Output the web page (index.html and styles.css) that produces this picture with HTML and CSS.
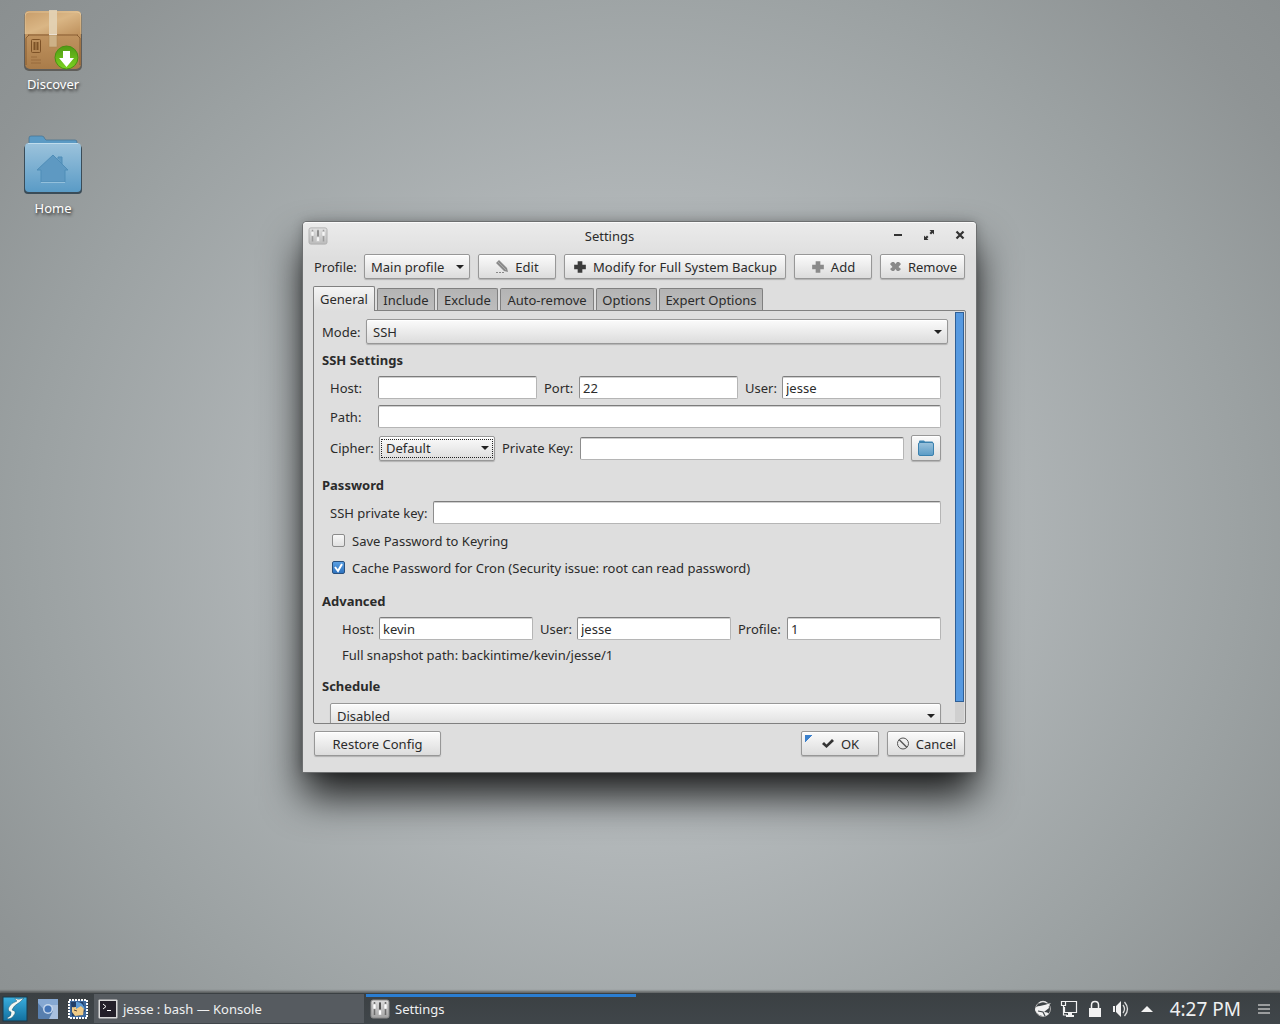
FILE: index.html
```html
<!DOCTYPE html>
<html lang="en">
<head>
<meta charset="utf-8">
<title>Settings</title>
<link rel="stylesheet" href="styles.css">
</head>
<body>
<svg class="defs" aria-hidden="true">
  <defs>
    <linearGradient id="box-top" x1="0" y1="0" x2="1" y2="1"><stop offset="0" stop-color="#c79c69"/><stop offset=".5" stop-color="#dab685"/><stop offset="1" stop-color="#be915d"/></linearGradient>
    <linearGradient id="box-front" x1="0" y1="0" x2="0" y2="1"><stop offset=".4" stop-color="#c0935f"/><stop offset="1" stop-color="#a97c4a"/></linearGradient>
    <linearGradient id="badge" x1="0" y1="0" x2="0" y2="1"><stop offset="0" stop-color="#4f9a14"/><stop offset="1" stop-color="#7cd321"/></linearGradient>
    <linearGradient id="folder" x1="0" y1="0" x2="0" y2="1"><stop offset="0" stop-color="#9cc3dc"/><stop offset="1" stop-color="#5a9bc6"/></linearGradient>
    <linearGradient id="cyan" x1="0" y1="0" x2="0" y2="1"><stop offset="0" stop-color="#3aaede"/><stop offset="1" stop-color="#12709f"/></linearGradient>
    <linearGradient id="silver" x1="0" y1="0" x2="0" y2="1"><stop offset="0" stop-color="#dedede"/><stop offset="1" stop-color="#a2a2a2"/></linearGradient>
    <symbol id="mixer" viewBox="0 0 20 20">
      <rect x="1" y="1" width="18" height="18" rx="2" fill="url(#silver)" stroke="#8b8b8b"/>
      <path d="M4.500 3v13M10 3v13M15.500 3v13" stroke="#6c6c6c" stroke-width="1.500"/>
      <path d="M3 5h3v5H3zM8.500 11h3v5h-3zM14 5h3v5h-3z" fill="#fff" stroke="#aaa" stroke-width=".5"/>
      <path d="M10 4v6" stroke="#444" stroke-width="1.500"/>
    </symbol>
    <symbol id="plus" viewBox="0 0 12 12"><path d="M4 1h4v3h3v4H8v3H4V8H1V4h3z" fill="currentColor"/></symbol>
  </defs>
</svg>

<main class="desktop">
  <nav class="shortcuts" aria-label="Desktop">
    <a class="shortcut" href="#discover">
      <svg width="62" height="62" viewBox="0 0 62 62" aria-hidden="true">
        <rect x="2" y="3" width="58" height="59" rx="5" fill="#4a4640" opacity=".7"/>
        <rect x="3" y="2" width="56" height="58" rx="5" fill="url(#box-front)"/>
        <path d="M3 25V6q0-4 4-4h48q4 0 4 4v19z" fill="url(#box-top)"/>
        <path d="M3 25V7q0-4 4-4h48q4 0 4 4v18" fill="none" stroke="#ecd2a8" opacity=".6"/>
        <path d="M6 26h50M4 56V29l3-3M58 56V29l-3-3" fill="none" stroke="#7d532a" opacity=".8"/>
        <path d="M27 1h8v24h-8z" fill="#e3d3b6" opacity=".9"/>
        <path d="M27 25h8v1h-8z" fill="#fff"/>
        <path d="M27 26h8v12h-8z" fill="#cdb187" stroke="#a9834f" stroke-width=".5"/>
        <g fill="none" stroke="#7d5227"><rect x="9.500" y="30.500" width="9" height="13" rx="1"/><path d="M12.500 41v-8M15.500 41v-8" stroke-width="2"/><path d="M9 48h6M9 51h10M9 54h10" opacity=".45"/></g>
        <circle cx="44.500" cy="48.500" r="11.500" fill="url(#badge)" stroke="#4a9014"/>
        <path d="M41 42h7v7h4l-7.500 9-7.500-9h4z" fill="#fff"/>
      </svg>
      <span>Discover</span>
    </a>
    <a class="shortcut" href="#home">
      <svg width="62" height="62" viewBox="0 0 62 62" aria-hidden="true">
        <path d="M7 14V5q0-2 2-2h11q2 0 3 3l1 1h29q2 0 2 2v8z" fill="#5b9ac4" stroke="#43718f" stroke-width=".7"/>
        <rect x="2" y="12" width="58" height="49" rx="4" fill="#3a4c58"/>
        <rect x="3" y="10" width="56" height="49" rx="4" fill="url(#folder)"/>
        <path d="M6 10.500h50" stroke="#bfdcec"/>
        <path d="M31 22 46 37h-3v12H19V37h-4zM36 26v-2h4v7" fill="#5e99c2" stroke="#4f8db7"/>
        <path d="M19 49.500h24" stroke="#93c0dc"/>
      </svg>
      <span>Home</span>
    </a>
  </nav>

  <form class="window" aria-label="Settings" onsubmit="return false">
    <header class="titlebar">
      <svg class="dim" width="20" height="18" viewBox="0 0 20 20" preserveAspectRatio="none" aria-hidden="true"><use href="#mixer"/></svg>
      <h1>Settings</h1>
      <div class="controls">
        <button type="button" aria-label="Minimize"><svg width="12" height="12" viewBox="0 0 12 12"><path d="M2 6h8" stroke="#333" stroke-width="2"/></svg></button>
        <button type="button" aria-label="Maximize"><svg width="12" height="12" viewBox="0 0 12 12"><path d="M6.500 1H11v4.500L9.500 4 8 5.500 6.500 4 8 2.500zM1 6.500 2.500 8 4 6.500 5.500 8 4 9.500 5.500 11H1z" fill="#333"/></svg></button>
        <button type="button" aria-label="Close"><svg width="12" height="12" viewBox="0 0 12 12"><path d="M2.500 2.500l7 7M9.500 2.500l-7 7" stroke="#333" stroke-width="2.200"/></svg></button>
      </div>
    </header>

    <div class="profiles">
      <label for="profile">Profile:</label>
      <select id="profile" class="profile-select"><option>Main profile</option></select>
      <button type="button" class="btn">
        <svg width="14" height="14" viewBox="0 0 14 14" aria-hidden="true"><path d="M4 0 12 8l1 4-4-1L1 3z" fill="#8a8a8a"/><path d="M3 2l8 8" stroke="#aaa"/><path d="M1 12.500h8" stroke="#888" stroke-dasharray="2 1"/></svg>
        Edit</button>
      <button type="button" class="btn wide">
        <svg class="dark" width="14" height="14" aria-hidden="true"><use href="#plus"/></svg>
        Modify for Full System Backup</button>
      <button type="button" class="btn">
        <svg class="grey" width="14" height="14" aria-hidden="true"><use href="#plus"/></svg>
        Add</button>
      <button type="button" class="btn remove">
        <svg width="14" height="14" viewBox="0 0 14 14" aria-hidden="true"><path d="M4 2h2l1.500 2L9 2h2l2 2-2.500 3 2.500 2-2 2H9L7.500 9 6 11H4L2 9l2.500-2L2 4z" fill="#8a8a8a"/></svg>
        Remove</button>
    </div>

    <div class="tabs" role="tablist">
      <button type="button" role="tab" class="tab t-general" aria-selected="true">General</button>
      <button type="button" role="tab" class="tab t-include">Include</button>
      <button type="button" role="tab" class="tab t-options">Exclude</button>
      <button type="button" role="tab" class="tab t-auto">Auto-remove</button>
      <button type="button" role="tab" class="tab t-options">Options</button>
      <button type="button" role="tab" class="tab t-expert">Expert Options</button>
    </div>

    <section class="pane" role="tabpanel" aria-label="General">
      <div class="fields">
        <div class="mode">
          <label for="mode">Mode:</label>
          <select id="mode"><option>SSH</option></select>
        </div>

        <h2>SSH Settings</h2>
        <div class="row ssh">
          <label for="host">Host:</label><input id="host" type="text">
          <label for="port">Port:</label><input id="port" type="text" value="22">
          <label for="user">User:</label><input id="user" type="text" value="jesse">
        </div>
        <div class="row path">
          <label for="path">Path:</label><input id="path" type="text">
        </div>
        <div class="row cipher">
          <label for="cipher">Cipher:</label>
          <span class="focused"><select id="cipher"><option>Default</option></select></span>
          <label for="key">Private Key:</label><input id="key" type="text">
          <button type="button" class="browse" aria-label="Choose key file">
            <svg width="18" height="18" viewBox="0 0 18 18" aria-hidden="true"><path d="M2 5V2.500Q2 1.500 3 1.500h4l1 1h7q1 0 1 1V5z" fill="#3f86b3"/><rect x="1.500" y="3.500" width="15" height="13" rx="1.500" fill="url(#folder)" stroke="#3b81ae"/></svg>
          </button>
        </div>

        <h2>Password</h2>
        <div class="row password">
          <label for="pkey">SSH private key:</label><input id="pkey" type="password">
        </div>
        <div class="check"><input id="keyring" type="checkbox"><label for="keyring">Save Password to Keyring</label></div>
        <div class="check"><input id="cron" type="checkbox" checked><label for="cron">Cache Password for Cron (Security issue: root can read password)</label></div>

        <h2>Advanced</h2>
        <div class="row advanced">
          <label for="ahost">Host:</label><input id="ahost" type="text" value="kevin">
          <label for="auser">User:</label><input id="auser" type="text" value="jesse">
          <label for="aprofile">Profile:</label><input id="aprofile" type="text" value="1">
        </div>
        <p class="snapshot">Full snapshot path: backintime/kevin/jesse/1</p>

        <h2>Schedule</h2>
        <div class="row schedule">
          <select aria-label="Schedule"><option>Disabled</option></select>
        </div>
      </div>
      <div class="scroll" aria-hidden="true"><div class="thumb"></div></div>
    </section>

    <footer class="actions">
      <button type="button" class="btn restore">Restore Config</button>
      <button type="submit" class="btn default">
        <svg width="14" height="14" viewBox="0 0 14 14" aria-hidden="true"><path d="M1 7l2-2 2.500 2.500L11 2l2 2-7.500 7z" fill="#333"/></svg>
        OK</button>
      <button type="button" class="btn">
        <svg width="14" height="14" viewBox="0 0 14 14" aria-hidden="true"><circle cx="7" cy="6.500" r="5.500" fill="none" stroke="#555"/><path d="M3 2.500l8 8" stroke="#555" stroke-width="1.500"/></svg>
        Cancel</button>
    </footer>
  </form>
</main>

<footer class="taskbar">
  <button type="button" class="launcher" aria-label="Applications">
    <svg width="26" height="26" viewBox="0 0 26 26"><rect x="1" y="1" width="24" height="24" fill="url(#cyan)" stroke="#1b3a4a"/><path d="M13 2q3 2 5 1l4-1-4 4q-7 4-8 8 5 1 2 5-2 4-6 4l-1-1q5-2 4-6-4-1-2-5 2-4 8-6-2-1-2-3z" fill="#f4f8f4" stroke="#275a70" stroke-width=".5"/></svg>
  </button>
  <button type="button" class="launcher" aria-label="Chromium">
    <svg width="20" height="20" viewBox="0 0 20 20"><rect width="20" height="20" rx="1" fill="#587fae"/><path d="M0 0h20v6H10L6 11 0 4z" fill="#86a8d2"/><path d="M10 6h10v14h-9l4-8z" fill="#a9c0de"/><circle cx="10" cy="10" r="5" fill="#c6d7ec"/><circle cx="10" cy="10" r="3.500" fill="#4576b8"/></svg>
  </button>
  <button type="button" class="launcher" aria-label="Mail">
    <svg width="20" height="20" viewBox="0 0 20 20"><rect x="1" y="1" width="18" height="18" fill="#3f699c" stroke="#fff" stroke-width="2" stroke-dasharray="2 1"/><path d="M3 3h12l2 9-5 5H4z" fill="#1f3d66"/><path d="M4 8q5 1 7-3l5 4-1 7-8 1-3-4z" fill="#f0cb86"/><path d="M8 3q7-1 9 8l-4-4-5 3z" fill="#5c9bd6"/><path d="M6 11l3 1" stroke="#543"/></svg>
  </button>
  <button type="button" class="task idle">
    <svg width="20" height="20" viewBox="0 0 20 20" aria-hidden="true"><rect x=".5" y=".5" width="19" height="19" rx="1" fill="#d8d8d8"/><rect x="2" y="2" width="16" height="16" fill="#231f29"/><path d="M5 5l3 2.500L5 10M9 11.500h4" fill="none" stroke="#fff"/></svg>
    jesse : bash — Konsole</button>
  <button type="button" class="task active">
    <svg width="20" height="20" aria-hidden="true"><use href="#mixer"/></svg>
    Settings</button>
  <div class="tray">
    <svg width="18" height="18" viewBox="0 0 18 18" aria-label="Updates"><circle cx="9" cy="9" r="7.500" fill="none" stroke="#aaa"/><path d="M1 10q0-4 5-4 5-1 11-3-3 2-2 5l-5 4q4 0 5 2-7 5-12-1z" fill="#f2f2f2"/><path d="M5 3q4-3 8 0" stroke="#ddd" stroke-width="1.500" fill="none"/><path d="M4 11l5 1 2 4" stroke="#40464a" stroke-width="1.200" fill="none"/></svg>
    <svg width="18" height="18" viewBox="0 0 18 18" aria-label="Network"><path d="M5 1.500h11.500v11H4.500V7M1.500 1.500h4v4h-4zM3.500 6v9H7" fill="none" stroke="#f2f2f2" stroke-width="1.200"/><path d="M8 13h4v2h2v2H6v-2h2z" fill="#f2f2f2"/></svg>
    <svg width="18" height="18" viewBox="0 0 18 18" aria-label="Lock"><path d="M3 8h12v9H3z" fill="#f2f2f2"/><path d="M5.500 8V5q0-3.500 3.500-3.500T12.500 5v3" fill="none" stroke="#f2f2f2" stroke-width="1.500"/></svg>
    <svg width="18" height="18" viewBox="0 0 18 18" aria-label="Volume"><path d="M1 6h2v6H1zM4 6l5-5v16l-5-5z" fill="#f2f2f2"/><path d="M11 5q3 4 0 8M12.500 2q6 7 0 14" fill="none" stroke="#ddd" stroke-width="1.300"/></svg>
    <svg width="18" height="18" viewBox="0 0 18 18" aria-label="More"><path d="M3 12l6-6 6 6z" fill="#f2f2f2"/></svg>
  </div>
  <time>4:27 PM</time>
  <button type="button" class="launcher menu" aria-label="Panel menu">
    <svg width="12" height="12" viewBox="0 0 12 12"><path d="M0 2h12M0 6h12M0 10h12" stroke="#9b9d9e" stroke-width="2"/></svg>
  </button>
</footer>
</body>
</html>
```
FILE: styles.css
```css
* { box-sizing: border-box; }

body {
  margin: 0;
  min-height: 100vh;
  display: flex;
  flex-direction: column;
  font: 13px/16px "Noto Sans", sans-serif;
  color: #2b2b2b;
  background: radial-gradient(ellipse 900px 840px at 50% 52%, #babfc1 0%, #b3b8ba 35%, #9ba1a2 68%, #8f9495 85%, #888d8e 100%);
}

button, input, select { font: inherit; color: inherit; margin: 0; }
h1, h2, p { margin: 0; font-size: inherit; font-weight: normal; }
.defs { position: absolute; width: 0; height: 0; }

/* Desktop */
.desktop {
  position: relative;
  flex: 1;
  display: flex;
  align-items: center;
  justify-content: center;
  padding: 1px 1px 0 0;
}
.shortcuts {
  position: absolute;
  top: 9px;
  left: 8px;
  display: flex;
  flex-direction: column;
  gap: 41px;
}
.shortcut {
  display: flex;
  flex-direction: column;
  align-items: center;
  gap: 5px;
  width: 90px;
  line-height: 16px;
  color: #fff;
  text-decoration: none;
  text-shadow: 1px 2px 3px #222;
}
.shortcut svg { display: block; }

/* Window */
.window {
  width: 673px;
  height: 550px;
  display: flex;
  flex-direction: column;
  padding: 0 10px 16px;
  background: linear-gradient(#ebebeb, #dedede 36px);
  border-radius: 4px 4px 0 0;
  box-shadow: inset 0 1px #fafafa, 0 0 0 1px #6d6f70, 0 24px 40px rgba(0, 0, 0, .85), 0 0 12px rgba(0, 0, 0, .25);
}
.titlebar {
  display: grid;
  grid-template-columns: 20px 1fr 80px;
  align-items: center;
  height: 32px;
  padding-bottom: 4px;
}
.titlebar h1 { text-align: center; }
.titlebar > svg { margin-left: -5px; }
.dim { opacity: .6; }
.controls { display: flex; justify-content: flex-end; gap: 19px; padding-bottom: 2px; }
.controls button { padding: 0; border: 0; background: none; line-height: 0; }

/* Buttons and drop-downs */
.btn, .browse, select {
  height: 25px;
  border: 1px solid #979797;
  border-radius: 2px;
  background: linear-gradient(#fbfbfb, #dcdcdc);
  box-shadow: 0 1px 1px rgba(0, 0, 0, .2), inset 0 1px #fff;
}
.btn {
  display: flex;
  align-items: center;
  justify-content: center;
  gap: 6px;
  width: 78px;
  padding: 0;
  white-space: nowrap;
}
.btn .dark { color: #3c3c3c; }
.btn .grey { color: #8a8a8a; }
select {
  appearance: none;
  width: 100%;
  padding: 0 6px;
  background: url("data:image/svg+xml,%3Csvg xmlns='http://www.w3.org/2000/svg' width='8' height='4'%3E%3Cpath d='M0 0h8L4 4z' fill='%23222'/%3E%3C/svg%3E") no-repeat right 5px center, linear-gradient(#fbfbfb, #dcdcdc);
}

.profiles { display: flex; align-items: center; gap: 8px; padding: 0 1px; }
.profiles label { width: 42px; white-space: nowrap; }
.profiles .profile-select { width: 106px; }
.profiles .wide { width: 222px; }
.profiles .remove { width: 85px; }

/* Tabs */
.tabs { display: flex; align-items: flex-end; gap: 2px; height: 24px; margin-top: 7px; }
.tab {
  height: 22px;
  padding: 0;
  border: 1px solid #808080;
  border-bottom: 0;
  border-radius: 2px 2px 0 0;
  background: linear-gradient(#b4b4b4, #bdbdbd);
  white-space: nowrap;
}
.tab[aria-selected="true"] {
  position: relative;
  height: 25px;
  margin-bottom: -1px;
  background: linear-gradient(#f4f4f4, #dedede);
}
.t-general { width: 62px; }
.t-include { width: 58px; }
.t-auto { width: 94px; }
.t-options { width: 61px; }
.t-expert { width: 104px; }

.pane {
  flex: 1;
  min-height: 0;
  display: flex;
  overflow: hidden;
  border: 1px solid #808080;
  border-radius: 0 2px 2px 2px;
  padding: 1px 1px 1px 0;
}
.fields { flex: 1; min-width: 0; padding: 7px 7px 0 8px; }
.scroll { width: 9px; background: #cfcfcf; }
.thumb { height: 95%; border: 1px solid #2f5f96; background: #5699e0; }

.fields h2 { font-weight: bold; line-height: 16px; }
.mode { display: grid; grid-template-columns: 37px 1fr; gap: 7px; align-items: center; margin-bottom: 8px; }
.row { display: grid; gap: 7px; align-items: center; margin: 0 7px 0 8px; white-space: nowrap; }
.row input {
  width: 100%;
  min-width: 0;
  height: 23px;
  padding: 0 3px;
  border: 1px solid #b5b5b5;
  border-top-color: #7c7c7c;
  border-left-color: #8d8d8d;
  border-radius: 2px;
  background: #fff;
  box-shadow: inset 0 1px #cfcfcf;
}
.ssh { grid-template-columns: 41px 1fr 28px 1fr 30px 1fr; margin-top: 8px; }
.path { grid-template-columns: 41px 1fr; margin-top: 6px; }
.cipher { grid-template-columns: 42px 116px 71px 1fr 30px; margin-top: 7px; margin-bottom: 16px; }
.focused { position: relative; display: flex; }
.focused::after {
  content: "";
  position: absolute;
  inset: 3px 2px;
  border: 1px dotted #222;
  pointer-events: none;
}
.browse { display: flex; align-items: center; justify-content: center; height: 26px; padding: 0; }
.password { grid-template-columns: 96px 1fr; margin-top: 8px; margin-bottom: 3px; }
.check { display: flex; align-items: center; gap: 7px; height: 27px; margin-left: 10px; }
.check input {
  appearance: none;
  width: 13px;
  height: 13px;
  border: 1px solid #8b8b8b;
  border-radius: 2px;
  background: linear-gradient(#f8f8f8, #e0e0e0);
}
.check input:checked {
  border-color: #28507e;
  background: url("data:image/svg+xml,%3Csvg xmlns='http://www.w3.org/2000/svg' width='11' height='11'%3E%3Cpath d='M2 5l3 4 4-7' fill='none' stroke='%23fff' stroke-width='2'/%3E%3C/svg%3E") center, linear-gradient(#5a9fe2, #2f74c0);
}
.check + h2 { margin-top: 12px; }
.advanced { grid-template-columns: 30px 1fr 30px 1fr 42px 1fr; margin-top: 8px; margin-left: 20px; }
.snapshot { margin: 7px 0 15px 20px; }
.schedule { margin-top: 9px; }

.actions { display: flex; gap: 8px; margin-top: 7px; padding: 0 1px; }
.actions .restore { width: 127px; margin-right: auto; }
.actions .default {
  background: linear-gradient(135deg, #3b80cc 5px, transparent 5px) no-repeat 3px 3px / 8px 8px, linear-gradient(#fbfbfb, #dcdcdc);
}

/* Panel */
.taskbar {
  display: flex;
  align-items: center;
  height: 31px;
  padding: 0 10px 0 2px;
  color: #eff0f1;
  background: linear-gradient(#3b4043, #40464a);
  box-shadow: 0 -1px 2px 1px rgba(0, 0, 0, .4);
}
.taskbar button { padding: 0; border: 0; background: none; color: inherit; }
.launcher { display: flex; margin-right: 10px; }
.taskbar .task {
  display: flex;
  align-items: center;
  gap: 5px;
  height: 29px;
  width: 270px;
  padding: 0 5px 0 4px;
}
.launcher + .task { margin-left: -4px; }
.taskbar .idle { background: #565b60; margin-right: 2px; }
.taskbar .active { box-shadow: inset 0 3px #2a7dd1; }
.tray { display: flex; gap: 8px; margin-left: auto; }
.taskbar time { margin: 0 17px 0 14px; font-size: 19px; line-height: 24px; white-space: nowrap; }
.taskbar .menu { margin: 0; }
```
